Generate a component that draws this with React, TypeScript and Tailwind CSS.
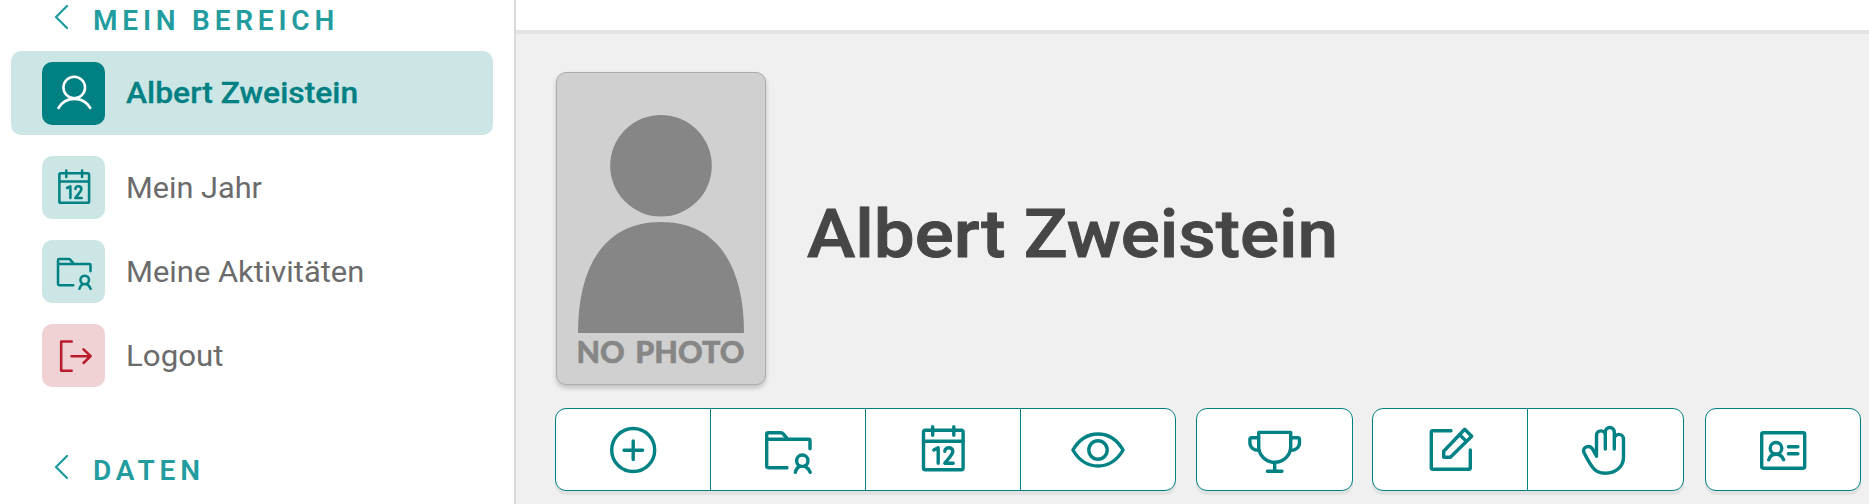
import type { ReactNode } from "react";

const paths: Record<string, ReactNode> = {
  user: (
    <>
      <circle cx="28.3" cy="20.7" r="14.4" />
      <path d="M7.3 48C11.5 40.6 19 35.8 28.5 35.8S45.5 40.6 49.7 48" />
    </>
  ),
  calendar: (
    <>
      <rect x="8.5" y="8.3" width="39.6" height="39.4" rx="1.8" />
      <path d="M8.5 19.3H48M17.7 4.8v8.4M38.8 4.8v8.4" />
      <path d="M18.8 28L23.2 25.7V41.3M29.8 29.2C30 24.6 37.8 24.4 37.8 29.4C37.8 32.4 33 37 29.8 41.2H38.2" />
    </>
  ),
  folder: (
    <>
      <path d="M50 26.8V18.6Q50 17.3 48.7 17.3H6.7M27 45.7H8.3Q6.7 45.7 6.7 44.1V12.3Q6.7 10.7 8.3 10.7H21Q22.3 10.7 23.2 11.8L27.7 17.2" />
      <circle cx="42.3" cy="38.7" r="5.7" />
      <path d="M35.3 50.3C35.9 47.6 37.6 45.4 39.6 44.2M45 44.2C47.1 45.4 49.2 47.6 50.2 50.3" />
    </>
  ),
  logout: <path d="M24.9 8.7H10.9V47.7H24.9M24.7 28.2H50M40.7 19.2L50.2 28.2L40.7 37.3" />,
  plus: (
    <>
      <circle cx="28.2" cy="28" r="21.5" />
      <path d="M28.2 19v18.5M19 28.2h18.6" />
    </>
  ),
  eye: (
    <>
      <path d="M2.9 28C8.5 18.5 16.8 12 28 12S47.5 18.5 53.1 28C47.5 37.5 39.2 44 28 44S8.5 37.5 2.9 28Z" />
      <circle cx="28" cy="28" r="9.2" />
    </>
  ),
  trophy: (
    <>
      <path d="M11.7 10.4H43.7V24.5C43.7 33.5 36.5 40.3 27.7 40.3S11.7 33.5 11.7 24.5ZM27.7 40.3V49.3M20.4 49.3H35" />
      <path d="M11.7 15.8H4.7Q2.9 15.8 2.9 17.6V20.5C2.9 25.2 6.5 28.3 11.7 28.4M43.7 15.8H50.7Q52.5 15.8 52.5 17.6V20.5C52.5 25.2 48.9 28.3 43.7 28.4" />
    </>
  ),
  edit: (
    <path d="M29 8.7H10.9Q9.3 8.7 9.3 10.3V45.7Q9.3 47.3 10.9 47.3H46.7Q48.3 47.3 48.3 45.7V28M21.7 35.3V29.2L42.7 7.3L49.7 14.3L28.4 35.3ZM37.6 12.6L44.4 19.4" />
  ),
  hand: (
    <path d="M18.5 34.3L14.7 27.2C11.1 22 3.6 25.3 6 30.6C8.6 36 11.3 41 14.6 45.3C17.3 49.2 22.3 51.3 27.3 51.3C37.8 51.3 45.5 44.6 45.5 35.5V17.3C45.5 10.8 36.3 10.8 36.3 17M36.3 27V10.5C36.3 3.8 27.3 3.8 27.3 10.5V27M27.3 13.5C27.3 7.3 18.5 7.3 18.5 13.5V34.3" />
  ),
  card: (
    <>
      <rect x="6.7" y="10.7" width="43" height="35.5" rx="1.6" />
      <circle cx="21" cy="26.3" r="5.8" />
      <path d="M13.7 37.7C14.7 34.4 17.5 32.2 21 32.2S27.5 34.4 28.6 37.7M33.4 24.7H42.9M33.4 31.7H42.9" />
    </>
  ),
};

function Icon({ name, className }: { name: string; className: string }) {
  return (
    <svg viewBox="0 0 56 56" className={className} fill="none" stroke="currentColor" strokeWidth="3.4" strokeLinecap="round" strokeLinejoin="round">
      {paths[name]}
    </svg>
  );
}

function SectionTitle({ children }: { children: ReactNode }) {
  return (
    <div className="flex h-8 items-center text-[#229c9e]">
      <svg viewBox="0 0 14 26" className="mt-0.5 ml-[54px] h-[26px] w-3.5 shrink-0" fill="none" stroke="currentColor" strokeWidth="2.3" strokeLinecap="round" strokeLinejoin="round">
        <path d="M13 2L2 13L13 24" />
      </svg>
      <span className="ml-[25px] pt-[9px] text-[28px] leading-8 font-semibold tracking-[4.8px] whitespace-nowrap">{children}</span>
    </div>
  );
}

function NavItem({ icon, label, tile, row, text }: { icon: string; label: string; tile: string; row: string; text: string }) {
  return (
    <div className={`ml-[11px] flex h-[84px] w-[482px] items-center rounded-[10px] pl-[31px] ${row}`}>
      <div className={`flex size-[63px] items-center justify-center rounded-[10px] ${tile}`}>
        <Icon name={icon} className="size-[42px]" />
      </div>
      <span className={`ml-[21px] origin-left text-[29.5px] leading-9 whitespace-nowrap ${text}`}>{label}</span>
    </div>
  );
}

function ButtonGroup({ icons, className }: { icons: string[]; className: string }) {
  return (
    <div className={`flex h-[83px] shrink-0 divide-x divide-[#008285] rounded-[11px] border border-[#008285] bg-white shadow-[0_4px_0_#e2e2e2] ${className}`}>
      {icons.map((icon) => (
        <button key={icon} className="flex w-[155px] shrink-0 items-center justify-center text-[#008285] last:w-auto last:flex-1">
          <Icon name={icon} className="size-14" />
        </button>
      ))}
    </div>
  );
}

export default function App() {
  return (
    <div className="flex h-[504px] w-[1869px] overflow-hidden bg-white font-['Roboto',sans-serif]">
      <aside className="flex w-[514px] shrink-0 flex-col">
        <SectionTitle>MEIN BEREICH</SectionTitle>
        <nav className="mt-[19px]">
          <NavItem icon="user" label="Albert Zweistein" row="bg-[#cce6e5]" tile="bg-[#008083] text-white" text="scale-x-[1.079] font-medium text-[#008083] [-webkit-text-stroke:0.3px_#008083]" />
          <div className="mt-[10.5px]">
            <NavItem icon="calendar" label="Mein Jahr" row="" tile="bg-[#cce6e5] text-[#008285]" text="scale-x-[1.04] pt-px text-[#6b6b6b]" />
            <NavItem icon="folder" label="Meine Aktivitäten" row="" tile="bg-[#cce6e5] text-[#008285]" text="scale-x-[1.047] text-[#6b6b6b]" />
            <NavItem icon="logout" label="Logout" row="" tile="bg-[#f0d1d4] text-[#b91c2b]" text="scale-x-[1.06] text-[#6b6b6b]" />
          </div>
        </nav>
        <div className="mt-[52.5px]">
          <SectionTitle>DATEN</SectionTitle>
        </div>
      </aside>
      <main className="flex w-[1355px] flex-col border-l-2 border-[#dadada] bg-[#f0f0f0]">
        <header className="h-[34px] shrink-0 border-b-4 border-[#e3e3e3] bg-white" />
        <section className="mt-[38px] ml-[40px] flex items-center">
          <div className="h-[313px] w-[210px] overflow-hidden rounded-[10px] border border-[#acacac] bg-[#d0d0d0] shadow-[0_3px_5px_rgba(0,0,0,0.2)]">
            <svg viewBox="557 73 208 311" className="h-[311px] w-[208px]" fill="#868686">
              <circle cx="661" cy="165.7" r="50.8" />
              <path d="M578 333C578 264 606 222 661 222S744 264 744 333Z" />
              <text x="576.5" y="363" fontFamily="Lato" fontWeight="900" fontSize="29.5" wordSpacing="3" textLength="168" lengthAdjust="spacingAndGlyphs" stroke="#868686" strokeWidth="0.5">NO PHOTO</text>
            </svg>
          </div>
          <h1 className="ml-[41px] origin-left scale-x-[1.079] pt-[10px] text-[67.5px] leading-[80px] font-medium whitespace-nowrap text-[#464646] [-webkit-text-stroke:0.9px_#464646]">Albert Zweistein</h1>
        </section>
        <div className="mt-[23px] ml-[39px] flex">
          <ButtonGroup icons={["plus", "folder", "calendar", "eye"]} className="w-[621px]" />
          <ButtonGroup icons={["trophy"]} className="ml-5 w-[157px]" />
          <ButtonGroup icons={["edit", "hand"]} className="ml-[19px] w-[312px]" />
          <ButtonGroup icons={["card"]} className="ml-[21px] w-[156px]" />
        </div>
      </main>
    </div>
  );
}
